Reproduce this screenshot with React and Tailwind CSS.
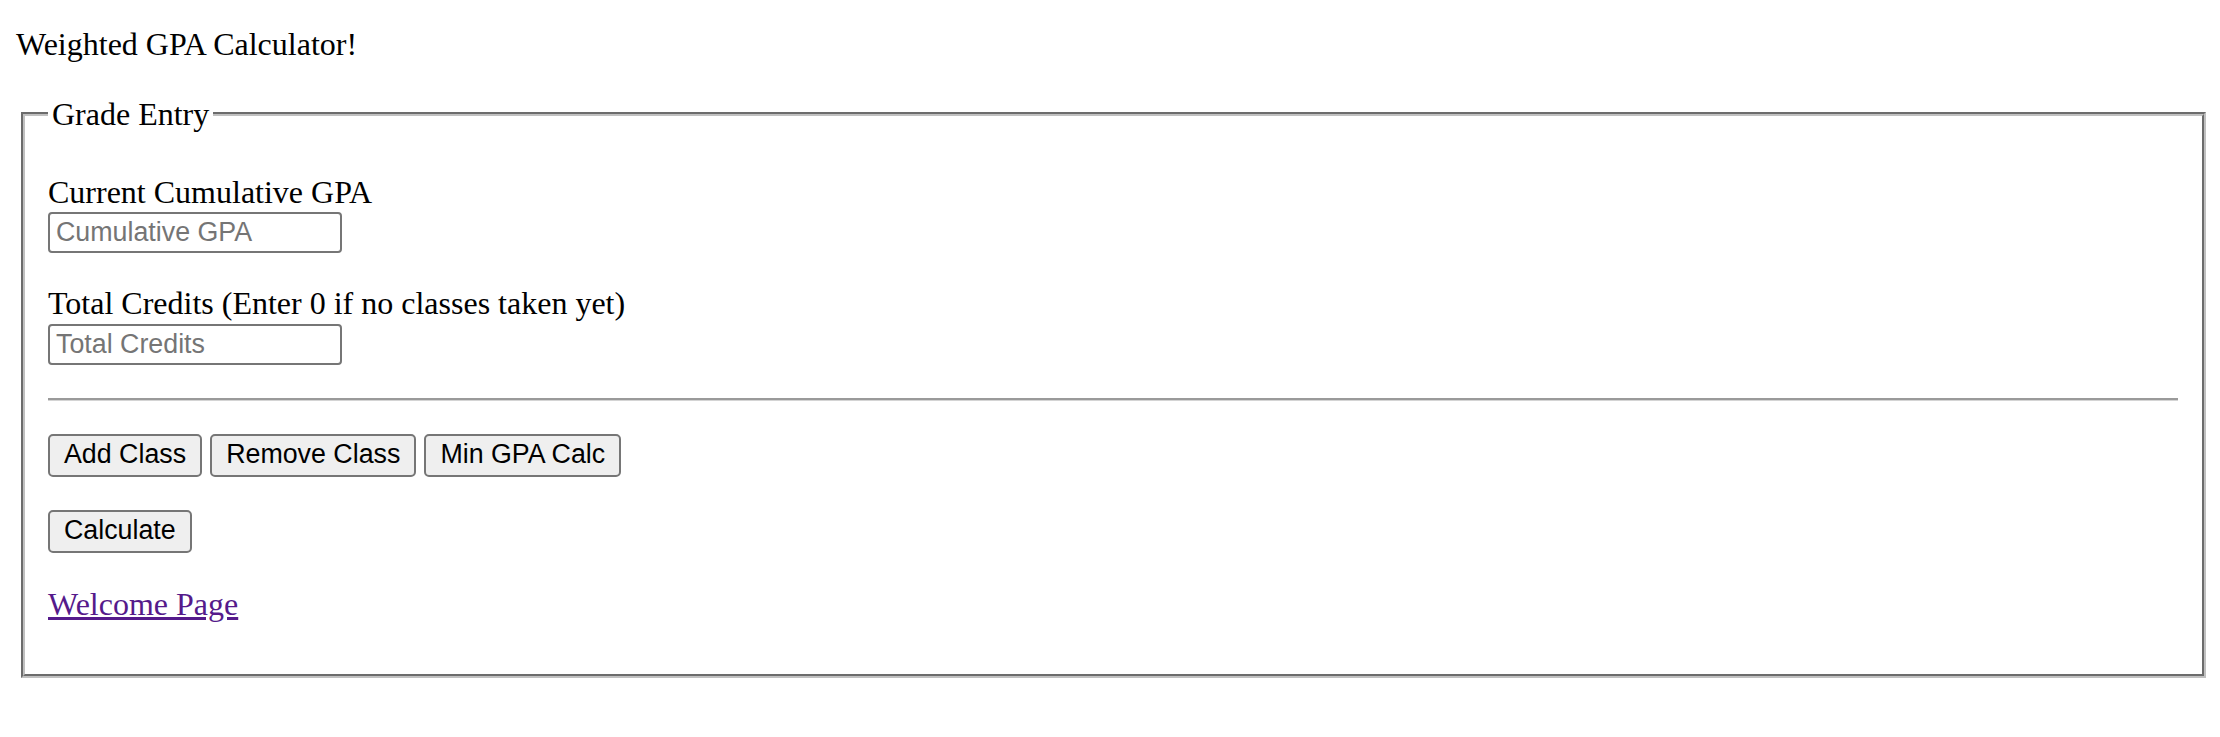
const serif = "font-['Liberation_Serif','Times_New_Roman',serif]";
const sans = "font-['Liberation_Sans',Arial,sans-serif]";

function Field({ label, placeholder, className, labelClass }) {
  return (
    <div className={`flex flex-col items-start ${className}`}>
      <label className={`block ${labelClass}`}>{label}</label>
      <input
        type="text"
        placeholder={placeholder}
        className={`mt-[2px] h-[41px] w-[294px] rounded-[4px] border-2 border-[#767676] bg-white pl-[6px] text-[26.8px] text-black placeholder:text-[#757575] outline-none ${sans}`}
      />
    </div>
  );
}

function Btn({ children }) {
  return (
    <button
      className={`flex h-[43px] items-center rounded-[5px] border-2 border-[#767676] bg-[#efefef] px-[14px] pb-[2px] text-[26.8px] text-black ${sans}`}
    >
      {children}
    </button>
  );
}

export default function App() {
  return (
    <div className={`min-h-[737px] w-full bg-white text-[32px] text-black ${serif}`}>
      <div className="h-[63px] pl-[16px] pt-[26px] leading-[37px]">Weighted GPA Calculator!</div>

      <fieldset className="ml-[21px] mr-[14px] mt-[33px] border-4 border-[#c0c0c0] pb-[51px] pl-[23px] pr-[24px] pt-[11px] [border-style:groove]">
        <legend className="px-[4px] leading-[36px]">Grade Entry</legend>

        <Field
          className="mt-[31px]"
          labelClass="h-[36px] leading-[36px]"
          label="Current Cumulative GPA"
          placeholder="Cumulative GPA"
        />
        <Field
          className="mt-[32px]"
          labelClass="h-[37px] leading-[37px]"
          label="Total Credits (Enter 0 if no classes taken yet)"
          placeholder="Total Credits"
        />

        <div className="mt-[33px] h-[3px] border-t-2 border-b border-t-[#9a9a9a] border-b-[#d4d4d4]" />

        <div className="mt-[33px] flex gap-[8px]">
          <Btn>Add Class</Btn>
          <Btn>Remove Class</Btn>
          <Btn>Min GPA Calc</Btn>
        </div>

        <div className="mt-[33px] flex">
          <Btn>Calculate</Btn>
        </div>

        <div className="mt-[33px] h-[37px] leading-[37px]">
          <a href="#" className="text-[#551a8b] underline">
            Welcome Page
          </a>
        </div>
      </fieldset>
    </div>
  );
}
